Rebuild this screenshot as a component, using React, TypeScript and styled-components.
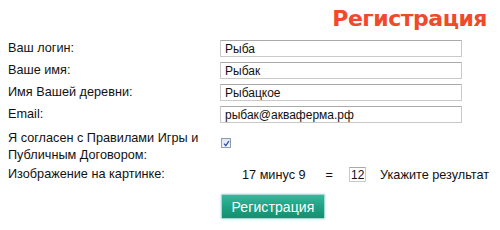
import React, { FC } from 'react'
import styled, { createGlobalStyle } from 'styled-components'

const GlobalStyle = createGlobalStyle`
  html, body {
    margin: 0;
    padding: 0;
    background: #fff;
  }
  body {
    font-family: 'Liberation Sans', Arial, sans-serif;
    font-size: 12.7px;
    color: #111;
  }
`

const Page = styled.div`
  width: 500px;
  height: 230px;
  overflow: hidden;
`

const Header = styled.div`
  display: flex;
  justify-content: flex-end;
  height: 40px;
  padding-right: 13px;
  box-sizing: border-box;
`

const Title = styled.h1`
  margin: 6px 0 0;
  font-family: 'Comic Sans MS', 'DejaVu Sans', sans-serif;
  font-weight: bold;
  font-size: 22px;
  line-height: 26px;
  color: #ef4a2b;
  letter-spacing: -0.5px;
`

const Form = styled.div`
  display: grid;
  grid-template-columns: 212px 1fr;
  padding-left: 8px;
`

const Label = styled.div<{ $height?: number; $top?: number }>`
  box-sizing: border-box;
  height: ${({ $height }) => $height ?? 22}px;
  padding-top: ${({ $top }) => $top ?? 0}px;
  line-height: 17px;
`

const Cell = styled.div<{ $height?: number; $top?: number }>`
  box-sizing: border-box;
  display: flex;
  align-items: flex-start;
  height: ${({ $height }) => $height ?? 22}px;
  padding-top: ${({ $top }) => $top ?? 0}px;
`

const TextInput = styled.input`
  box-sizing: border-box;
  width: 242px;
  height: 17px;
  margin: 0;
  padding: 0 4px;
  border: 1px solid #c9c9c9;
  border-top-color: #a9a9a9;
  border-radius: 1px;
  font-family: 'Liberation Sans', Arial, sans-serif;
  font-size: 12px;
  color: #111;
  outline: none;
  background: #fff;
`

const Check = styled.span`
  display: inline-flex;
  align-items: center;
  justify-content: center;
  box-sizing: border-box;
  width: 10px;
  height: 10px;
  margin-left: 1px;
  border: 1px solid #8f9cb1;
  background: linear-gradient(#dfe6f0, #f4f6fa);
`

const Captcha = styled.div`
  display: flex;
  align-items: center;
  height: 17px;
  padding-left: 22px;
`

const Equals = styled.span`
  margin-left: 20px;
`

const SmallInput = styled.input`
  box-sizing: border-box;
  width: 17px;
  height: 15px;
  margin: 0 0 0 16px;
  padding: 0 1px;
  border: 1px solid #c9c9c9;
  border-top-color: #a9a9a9;
  font-family: 'Liberation Sans', Arial, sans-serif;
  font-size: 12px;
  color: #111;
  outline: none;
`

const Hint = styled.span`
  margin-left: 14px;
`

const Button = styled.button`
  box-sizing: border-box;
  width: 104px;
  height: 25px;
  margin: 0 0 0 1px;
  padding: 0;
  border: 1px solid #a8d8d0;
  border-radius: 1px;
  background: linear-gradient(#35b99a 0%, #1ea283 50%, #13906f 100%);
  box-shadow: 0 0 2px rgba(80, 170, 200, 0.6);
  color: #fff;
  font-family: 'Liberation Sans', Arial, sans-serif;
  font-size: 14px;
  letter-spacing: 0.1px;
`

type FieldProps = { label: string; value: string }

const Field: FC<FieldProps> = ({ label, value }) => (
  <>
    <Label>{label}</Label>
    <Cell>
      <TextInput defaultValue={value} />
    </Cell>
  </>
)

const fields: FieldProps[] = [
  { label: 'Ваш логин:', value: 'Рыба' },
  { label: 'Ваше имя:', value: 'Рыбак' },
  { label: 'Имя Вашей деревни:', value: 'Рыбацкое' },
  { label: 'Email:', value: 'рыбак@акваферма.рф' },
]

const App: FC = () => (
  <Page>
    <GlobalStyle />
    <Header>
      <Title>Регистрация</Title>
    </Header>
    <Form>
      {fields.map(f => (
        <Field key={f.label} {...f} />
      ))}
      <Label $height={36} $top={2}>
        Я согласен с Правилами Игры и
        <br />
        Публичным Договором:
      </Label>
      <Cell $height={36} $top={10}>
        <Check>
          <svg width="7" height="7" viewBox="0 0 7 7">
            <path d="M1 3.6 L2.8 5.6 L6 1" fill="none" stroke="#2a4fa8" strokeWidth="1.3" />
          </svg>
        </Check>
      </Cell>
      <Label $height={26} $top={2}>
        Изображение на картинке:
      </Label>
      <Cell $height={26} $top={2}>
        <Captcha>
          <span>17 минус 9</span>
          <Equals>=</Equals>
          <SmallInput defaultValue="12" />
          <Hint>Укажите результат</Hint>
        </Captcha>
      </Cell>
      <div />
      <Cell $height={40} $top={4}>
        <Button>Регистрация</Button>
      </Cell>
    </Form>
  </Page>
)

export default App
